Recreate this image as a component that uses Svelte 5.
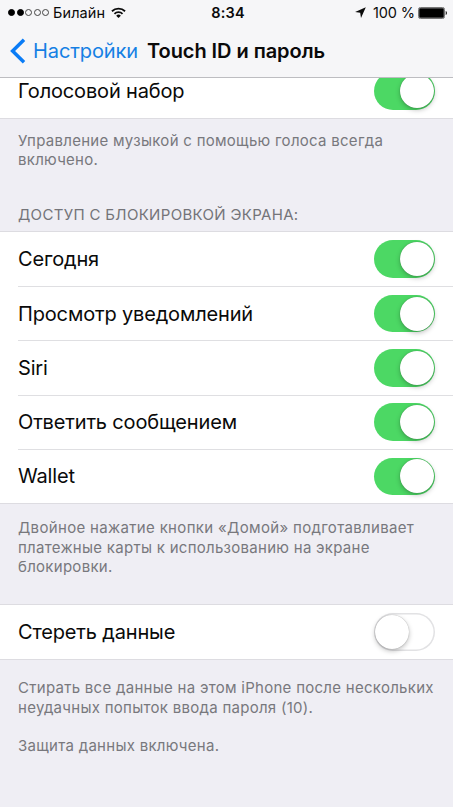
<script lang="ts">
  type Row = { label: string; on: boolean };
  type Group = { id: string; title?: string; rows: Row[]; notes: string[][] };

  let groups = $state<Group[]>([
    {
      id: "voice",
      rows: [{ label: "Голосовой набор", on: true }],
      notes: [["Управление музыкой с помощью голоса всегда", "включено."]],
    },
    {
      id: "lock",
      title: "Доступ с блокировкой экрана:",
      rows: [
        { label: "Сегодня", on: true },
        { label: "Просмотр уведомлений", on: true },
        { label: "Siri", on: true },
        { label: "Ответить сообщением", on: true },
        { label: "Wallet", on: true },
      ],
      notes: [
        [
          "Двойное нажатие кнопки «Домой» подготавливает",
          "платежные карты к использованию на экране",
          "блокировки.",
        ],
      ],
    },
    {
      id: "erase",
      rows: [{ label: "Стереть данные", on: false }],
      notes: [
        ["Стирать все данные на этом iPhone после нескольких", "неудачных попыток ввода пароля (10)."],
        ["Защита данных включена."],
      ],
    },
  ]);

  const SIGNAL = 2; // filled dots out of five
</script>

<div class="screen">
  <header>
    <div class="status">
      <div class="carrier">
        <span class="dots">
          {#each Array(5) as _, i}
            <i class:full={i < SIGNAL}></i>
          {/each}
        </span>
        <span class="operator">Билайн</span>
        <svg class="wifi" viewBox="0 0 16 12" aria-hidden="true">
          <g fill="none" stroke="#0a0a0a" stroke-width="1.9">
            <path d="M1 4.4a10 10 0 0 1 14 0" />
            <path d="M3.7 7.2a6.1 6.1 0 0 1 8.6 0" />
          </g>
          <path d="M8 11.6 5.5 9.1a3.6 3.6 0 0 1 5 0z" fill="#0a0a0a" />
        </svg>
      </div>
      <span class="time">8:34</span>
      <div class="power">
        <svg class="location" viewBox="0 0 11 11" aria-hidden="true">
          <path d="M10.8.2 6 10.9 5.2 5.8.1 5z" fill="#0a0a0a" />
        </svg>
        <span class="percent">100 %</span>
        <svg class="battery" viewBox="0 0 30 12" aria-hidden="true">
          <rect x=".5" y=".5" width="26" height="11" rx="1.8" fill="none" stroke="#777" stroke-width="1" />
          <rect x="1.2" y="1.2" width="24.6" height="9.6" rx=".8" fill="#000" />
          <path d="M27.7 4c1.7.3 1.7 3.7 0 4z" fill="#222" />
        </svg>
      </div>
    </div>

    <nav>
      <button class="back">
        <svg viewBox="0 0 16 26" aria-hidden="true">
          <path d="M14 1.8 2.6 13 14 24.2" fill="none" stroke="#0a7cf6" stroke-width="3.5" />
        </svg>
        <span>Настройки</span>
      </button>
      <h1>Touch ID и пароль</h1>
    </nav>
  </header>

  <main>
    {#each groups as group (group.id)}
      <section class={group.id}>
        {#if group.title}<h2>{group.title}</h2>{/if}
        <ul>
          {#each group.rows as row (row.label)}
            <li>
              <span class="label">{row.label}</span>
              <button
                class="switch"
                class:on={row.on}
                role="switch"
                aria-checked={row.on}
                aria-label={row.label}
                onclick={() => (row.on = !row.on)}
              ></button>
            </li>
          {/each}
        </ul>
        <div class="notes">
          {#each group.notes as note}
            <p>
              {#each note as line}<span>{line}</span>{/each}
            </p>
          {/each}
        </div>
      </section>
    {/each}
  </main>
</div>

<style>
  :global(body) { background: #efeff4; }
  .screen {
    width: 453px; height: 807px; overflow: hidden;
    display: flex; flex-direction: column;
    background: #efeef4; color: #0a0a0a;
    font-family: Inter, "Liberation Sans", sans-serif;
  }
  button { appearance: none; border: 0; margin: 0; padding: 0; background: none; font: inherit; cursor: pointer; }
  h1, h2, p, ul { margin: 0; padding: 0; font-weight: 400; }

  header {
    position: relative; z-index: 1; flex: none; box-sizing: border-box; height: 78px;
    background: #f6f6f8; border-bottom: 1px solid #bdbdc1;
  }
  .status {
    display: grid; grid-template-columns: 1fr auto 1fr; align-items: center;
    height: 25px; padding: 0 5px 0 8px; font-size: 14.5px; line-height: 25px;
  }
  .carrier, .power, .dots { display: flex; align-items: center; }
  .dots { gap: 1.5px; }
  .dots i { box-sizing: border-box; width: 7px; height: 7px; border: 1px solid #444; border-radius: 50%; }
  .dots i.full { background: #000; border-color: #000; }
  .operator { margin-left: 4px; letter-spacing: 0.1px; }
  .wifi { width: 15px; height: 11.5px; margin-left: 6px; }
  .time { font-weight: 600; letter-spacing: 0.2px; }
  .power { justify-content: flex-end; }
  .location { width: 11px; height: 11px; margin-right: 7px; }
  .percent { letter-spacing: -0.1px; }
  .battery { width: 30px; height: 12px; margin-left: 3px; }

  nav { display: flex; align-items: center; height: 52px; padding-left: 10px; }
  .back { display: flex; align-items: center; gap: 7px; color: #1580e4; font-size: 20px; letter-spacing: -0.1px; }
  .back svg { width: 16px; height: 26px; }
  h1 { margin-left: 9px; font-size: 20px; font-weight: 600; letter-spacing: -0.06px; white-space: nowrap; }

  main { flex: none; }
  ul { list-style: none; background: #fff; border: solid #dddce1; border-width: 1px 0; }
  .voice ul { margin-top: -15px; }
  li {
    display: flex; align-items: center; justify-content: space-between;
    box-sizing: border-box; height: 54.3px; margin-left: 18px; padding-right: 18px;
  }
  li + li { border-top: 1px solid #dfdfe2; }
  .label { font-size: 20px; letter-spacing: -0.16px; white-space: nowrap; }

  .switch {
    flex: none; display: flex; align-items: center; box-sizing: border-box;
    width: 61.5px; height: 37.6px; padding: 0 1.5px; border-radius: 19px;
    background: #fff; box-shadow: inset 0 0 0 1.5px #e2e2e4;
  }
  .switch::before {
    content: ""; width: 34px; height: 34px; border-radius: 50%;
    background: #fff; box-shadow: 0 0 1px rgb(0 0 0 / 0.35), 0 2px 5px rgb(0 0 0 / 0.25);
  }
  .switch.on { justify-content: flex-end; background: #4cd864; box-shadow: none; }

  h2 {
    height: 28px; padding: 33px 18px 0; font-size: 15px; line-height: 24px;
    letter-spacing: 0.33px; color: #747479; text-transform: uppercase; white-space: nowrap;
  }
  .notes {
    padding: 11.5px 18px 0; display: flex; flex-direction: column; gap: 19.4px;
    font-size: 15px; line-height: 19.4px; letter-spacing: 0.28px; color: #78787d;
  }
  .notes span { display: block; white-space: nowrap; }
  .lock .notes { padding-top: 14px; padding-bottom: 27.7px; }
  .lock .notes span:first-child { letter-spacing: 0.33px; }
  .erase li { height: 53.6px; }
  .erase .notes { padding-top: 18.5px; }
</style>
